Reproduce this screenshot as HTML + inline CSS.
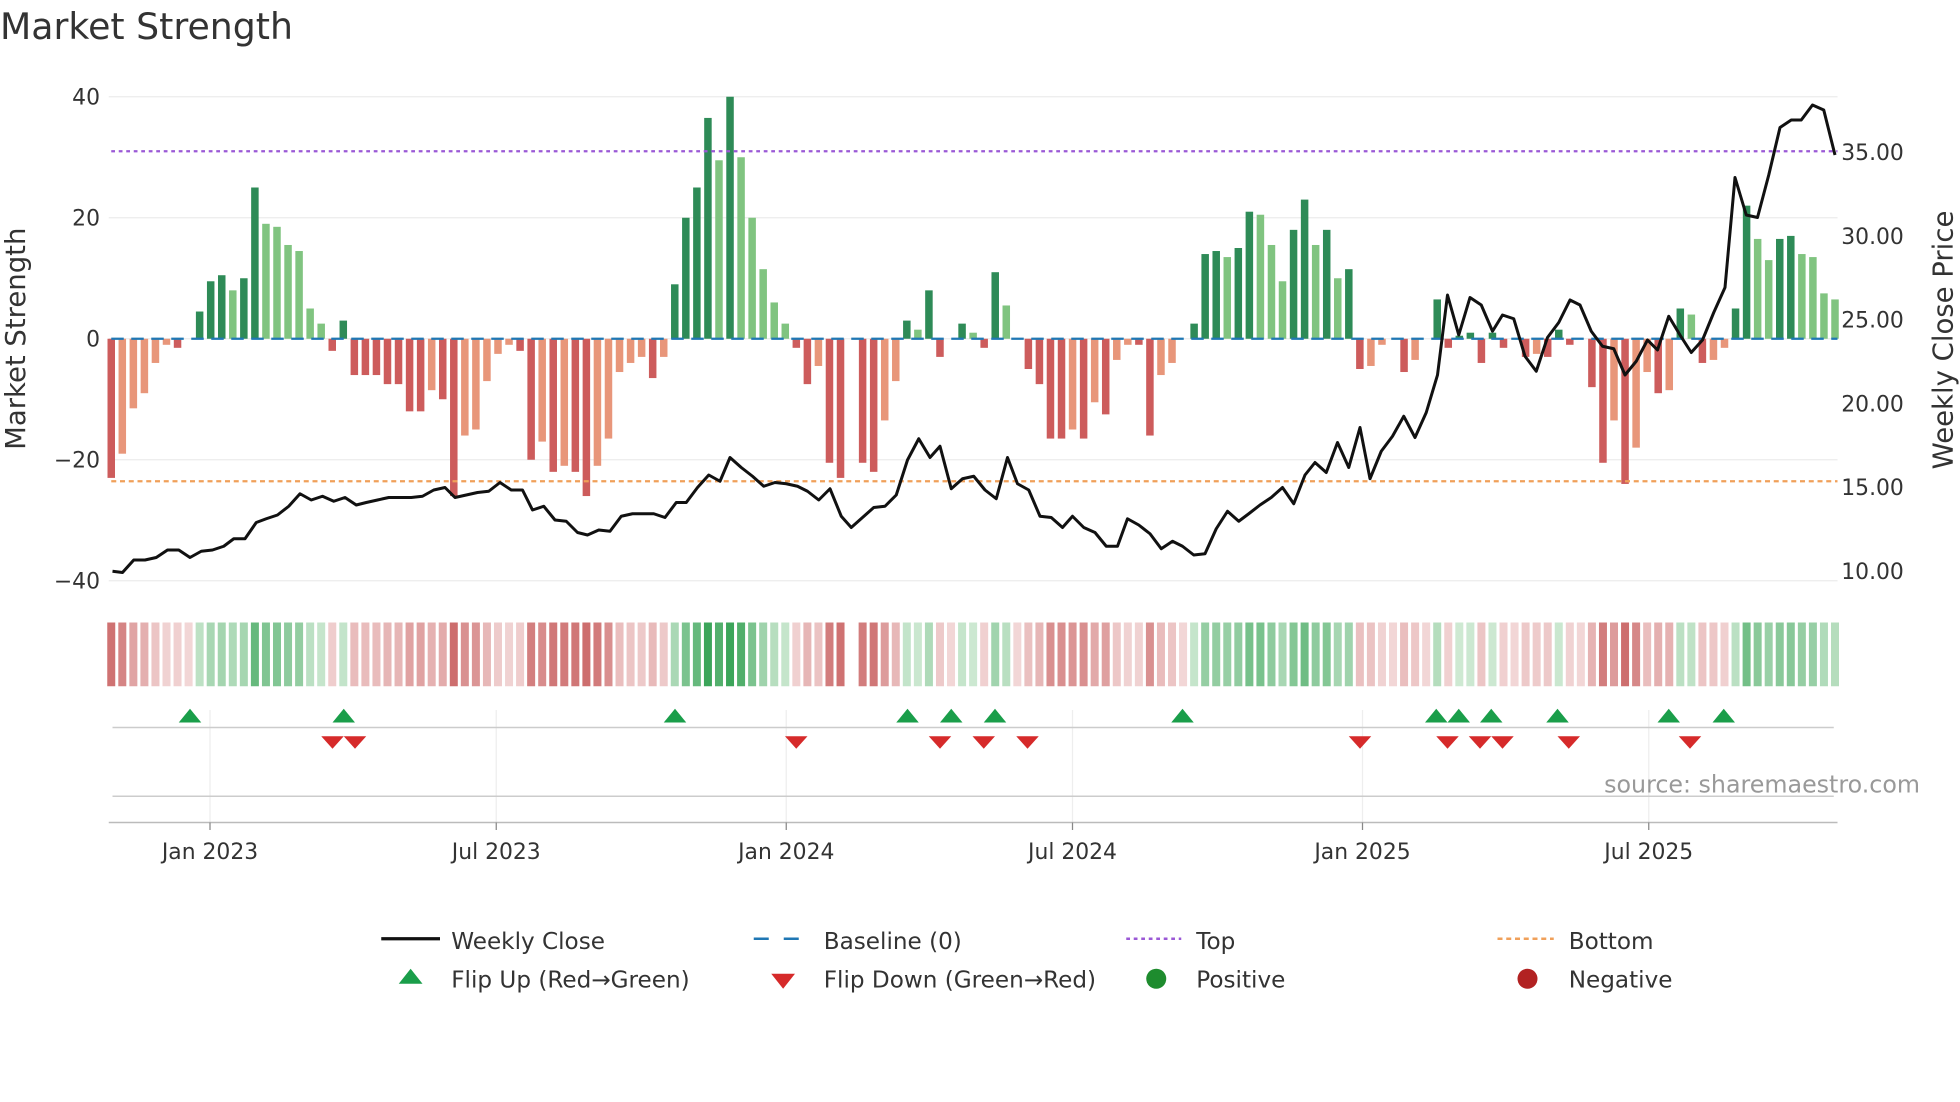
<!DOCTYPE html>
<html><head><meta charset="utf-8"><style>
html,body{margin:0;padding:0;background:#fff;width:1960px;height:1102px;overflow:hidden}
svg{display:block}
text{font-family:"DejaVu Sans","Liberation Sans",sans-serif}
</style></head><body>
<svg id="s" width="1960" height="1102" viewBox="0 0 1568 881.6" xmlns="http://www.w3.org/2000/svg">
<text x="0" y="31" font-size="29" fill="#333">Market Strength</text>
<g id="grid"></g>
<g id="bars"></g>
<g id="heat"></g>
<g id="top"></g>
</svg>
<script>
const NS="http://www.w3.org/2000/svg";
function el(p,t,a,txt){const e=document.createElementNS(NS,t);for(const k in a)e.setAttribute(k,a[k]);if(txt!==undefined)e.textContent=txt;document.getElementById(p).appendChild(e);return e;}
const V=[-23,-19,-11.5,-9,-4,-1,-1.5,0,4.5,9.5,10.5,8,10,25,19,18.5,15.5,14.5,5,2.5,-2,3,-6,-6,-6,-7.5,-7.5,-12,-12,-8.5,-10,-26,-16,-15,-7,-2.5,-1,-2,-20,-17,-22,-21,-22,-26,-21,-16.5,-5.5,-4,-3,-6.5,-3,9,20,25,36.5,29.5,40,30,20,11.5,6,2.5,-1.5,-7.5,-4.5,-20.5,-23,0,-20.5,-22,-13.5,-7,3,1.5,8,-3,0,2.5,1,-1.5,11,5.5,0,-5,-7.5,-16.5,-16.5,-15,-16.5,-10.5,-12.5,-3.5,-1,-1,-16,-6,-4,0,2.5,14,14.5,13.5,15,21,20.5,15.5,9.5,18,23,15.5,18,10,11.5,-5,-4.5,-1,0,-5.5,-3.5,0,6.5,-1.5,0.5,1,-4,1,-1.5,0,-3,-2.5,-3,1.5,-1,0,-8,-20.5,-13.5,-24,-18,-5.5,-9,-8.5,5,4,-4,-3.5,-1.5,5,22,16.5,13,16.5,17,14,13.5,7.5,6.5];
const step=(1468-89)/(V.length-1);
const X=i=>89+i*step;
const Y=v=>271-v*4.84;
[40,20,0,-20,-40].forEach(v=>{el('grid','line',{x1:87,x2:1470,y1:Y(v),y2:Y(v),stroke:'#ebebeb','stroke-width':1});
 el('grid','text',{x:80,y:Y(v)+6,'font-size':17.5,fill:'#333','text-anchor':'end'},v<0?'\u2212'+(-v):String(v));});
[[35,122],[30,189],[25,256],[20,323],[15,390],[10,457]].forEach(([p,y])=>el('grid','text',{x:1473,y:y+6,'font-size':17.5,fill:'#333'},p.toFixed(2)));
el('grid','text',{transform:'translate(20,271) rotate(-90)','font-size':22,fill:'#333','text-anchor':'middle'},'Market Strength');
el('grid','text',{transform:'translate(1562,272) rotate(-90)','font-size':22,fill:'#333','text-anchor':'middle'},'Weekly Close Price');
for(let i=0;i<V.length;i++){const v=V[i];if(v===0)continue;const p=i?V[i-1]:0;
 const dark=Math.abs(v)>=Math.abs(p)||Math.sign(v)!==Math.sign(p);
 const c=v>0?(dark?'#2e8b57':'#80c480'):(dark?'#cd5c5c':'#e8967a');
 el('bars','rect',{x:X(i)-3,width:6,y:Math.min(Y(v),271),height:Math.abs(v)*4.84,fill:c});}
el('bars','line',{x1:89,x2:1470,y1:271,y2:271,stroke:'#1f77b4','stroke-width':1.8,'stroke-dasharray':'10,6'});
el('bars','line',{x1:89,x2:1470,y1:121,y2:121,stroke:'#9b59d6','stroke-width':1.8,'stroke-dasharray':'3,3'});
el('bars','line',{x1:89,x2:1470,y1:385,y2:385,stroke:'#f0a05a','stroke-width':1.8,'stroke-dasharray':'4,3'});
const L="90,457 98,458 107,448 116,448 125,446 134,440 143,440 152,446 161,441 170,440 179,437 187,431 196,431 205,418 213,415 222,412 231,405 240,395 249,400 258,397 267,401 276,398 285,404 293,402 302,400 311,398 320,398 329,398 338,397 347,392 356,390 364,398 373,396 382,394 391,393 400,386 409,392 418,392 426,408 435,405 444,416 453,417 462,426 470,428 479,424 488,425 497,413 506,411 514,411 523,411 532,414 541,402 549,402 558,390 567,380 576,385 584,366 593,374 602,381 611,389 620,386 629,387 638,389 646,393 655,400 664,391 673,413 681,422 690,414 699,406 708,405 717,396 726,368 735,351 744,366 752,357 761,391 770,383 779,381 788,392 797,399 806,366 814,387 823,392 832,413 841,414 850,422 858,413 867,422 876,426 885,437 894,437 902,415 911,420 920,427 929,439 938,433 946,437 955,444 964,443 973,423 982,409 991,417 999,411 1008,404 1017,398 1026,390 1035,403 1044,380 1052,370 1061,378 1070,354 1079,374 1088,342 1096,383 1105,361 1114,349 1123,333 1132,350 1141,330 1150,300 1158,236 1167,268 1176,238 1185,244 1194,265 1202,252 1211,255 1220,285 1229,297 1238,270 1247,258 1256,240 1264,244 1273,265 1282,277 1291,279 1300,300 1309,289 1318,272 1326,280 1335,253 1344,268 1353,282 1362,272 1371,250 1380,230 1388,142 1397,172 1406,174 1415,140 1424,102 1433,96 1441,96 1450,84 1459,88 1468,124";
el('bars','polyline',{points:L,fill:'none',stroke:'#111','stroke-width':2.4,'stroke-linejoin':'round'});
function mix(a,b,t){return 'rgb('+a.map((x,k)=>Math.round(x+(b[k]-x)*t)).join(',')+')';}
for(let i=0;i<V.length;i++){if(i===67)continue;const v=V[i];let c;
 if(v>0)c=mix([208,234,212],[60,165,90],Math.min(1,v/35));
 else c=mix([242,214,214],[205,110,110],Math.min(1,-v/24));
 el('heat','rect',{x:X(i)-3.2,y:498,width:6.4,height:51,fill:c});}
[168,397,629,858,1090,1319].forEach(x=>el('grid','line',{x1:x,x2:x,y1:568,y2:658,stroke:'#eee','stroke-width':1}));
el('top','line',{x1:90,x2:1467,y1:582,y2:582,stroke:'#ccc','stroke-width':1.2});
el('top','line',{x1:90,x2:1467,y1:637,y2:637,stroke:'#ccc','stroke-width':1.2});
el('top','line',{x1:87,x2:1470,y1:658,y2:658,stroke:'#bbb','stroke-width':1.2});
[152,275,540,726,761,796,946,1149,1167,1193,1246,1335,1379].forEach(x=>el('top','polygon',{points:`${x-9},578 ${x+9},578 ${x},567`,fill:'#1a9e4a'}));
[266,284,637,752,787,822,1088,1158,1184,1202,1255,1352].forEach(x=>el('top','polygon',{points:`${x-9},589 ${x+9},589 ${x},599`,fill:'#d62a2a'}));
[['Jan 2023',168],['Jul 2023',397],['Jan 2024',629],['Jul 2024',858],['Jan 2025',1090],['Jul 2025',1319]].forEach(([t,x])=>{
 el('top','line',{x1:x,x2:x,y1:658,y2:664,stroke:'#888'});
 el('top','text',{x:x,y:687,'font-size':17.5,fill:'#333','text-anchor':'middle'},t);});
el('top','text',{x:1536,y:634,'font-size':19,fill:'#999','text-anchor':'end'},'source: sharemaestro.com');
const f={'font-size':18.5,fill:'#333'};
el('top','line',{x1:305,x2:352,y1:751,y2:751,stroke:'#111','stroke-width':2.6});
el('top','text',Object.assign({x:361,y:759},f),'Weekly Close');
el('top','line',{x1:603,x2:645,y1:751,y2:751,stroke:'#1f77b4','stroke-width':2,'stroke-dasharray':'12,12'});
el('top','text',Object.assign({x:659,y:759},f),'Baseline (0)');
el('top','line',{x1:901,x2:945,y1:751,y2:751,stroke:'#9b59d6','stroke-width':2,'stroke-dasharray':'3,3'});
el('top','text',Object.assign({x:957,y:759},f),'Top');
el('top','line',{x1:1198,x2:1243,y1:751,y2:751,stroke:'#f0a05a','stroke-width':2,'stroke-dasharray':'4,3'});
el('top','text',Object.assign({x:1255,y:759},f),'Bottom');
el('top','polygon',{points:'319,787 338,787 328.5,775',fill:'#1a9e4a'});
el('top','text',Object.assign({x:361,y:790},f),'Flip Up (Red\u2192Green)');
el('top','polygon',{points:'617,779 636,779 626.5,791',fill:'#d62a2a'});
el('top','text',Object.assign({x:659,y:790},f),'Flip Down (Green\u2192Red)');
el('top','circle',{cx:925,cy:783,r:8,fill:'#1e8c2e'});
el('top','text',Object.assign({x:957,y:790},f),'Positive');
el('top','circle',{cx:1222,cy:783,r:8,fill:'#b22222'});
el('top','text',Object.assign({x:1255,y:790},f),'Negative');
</script>
</body></html>
